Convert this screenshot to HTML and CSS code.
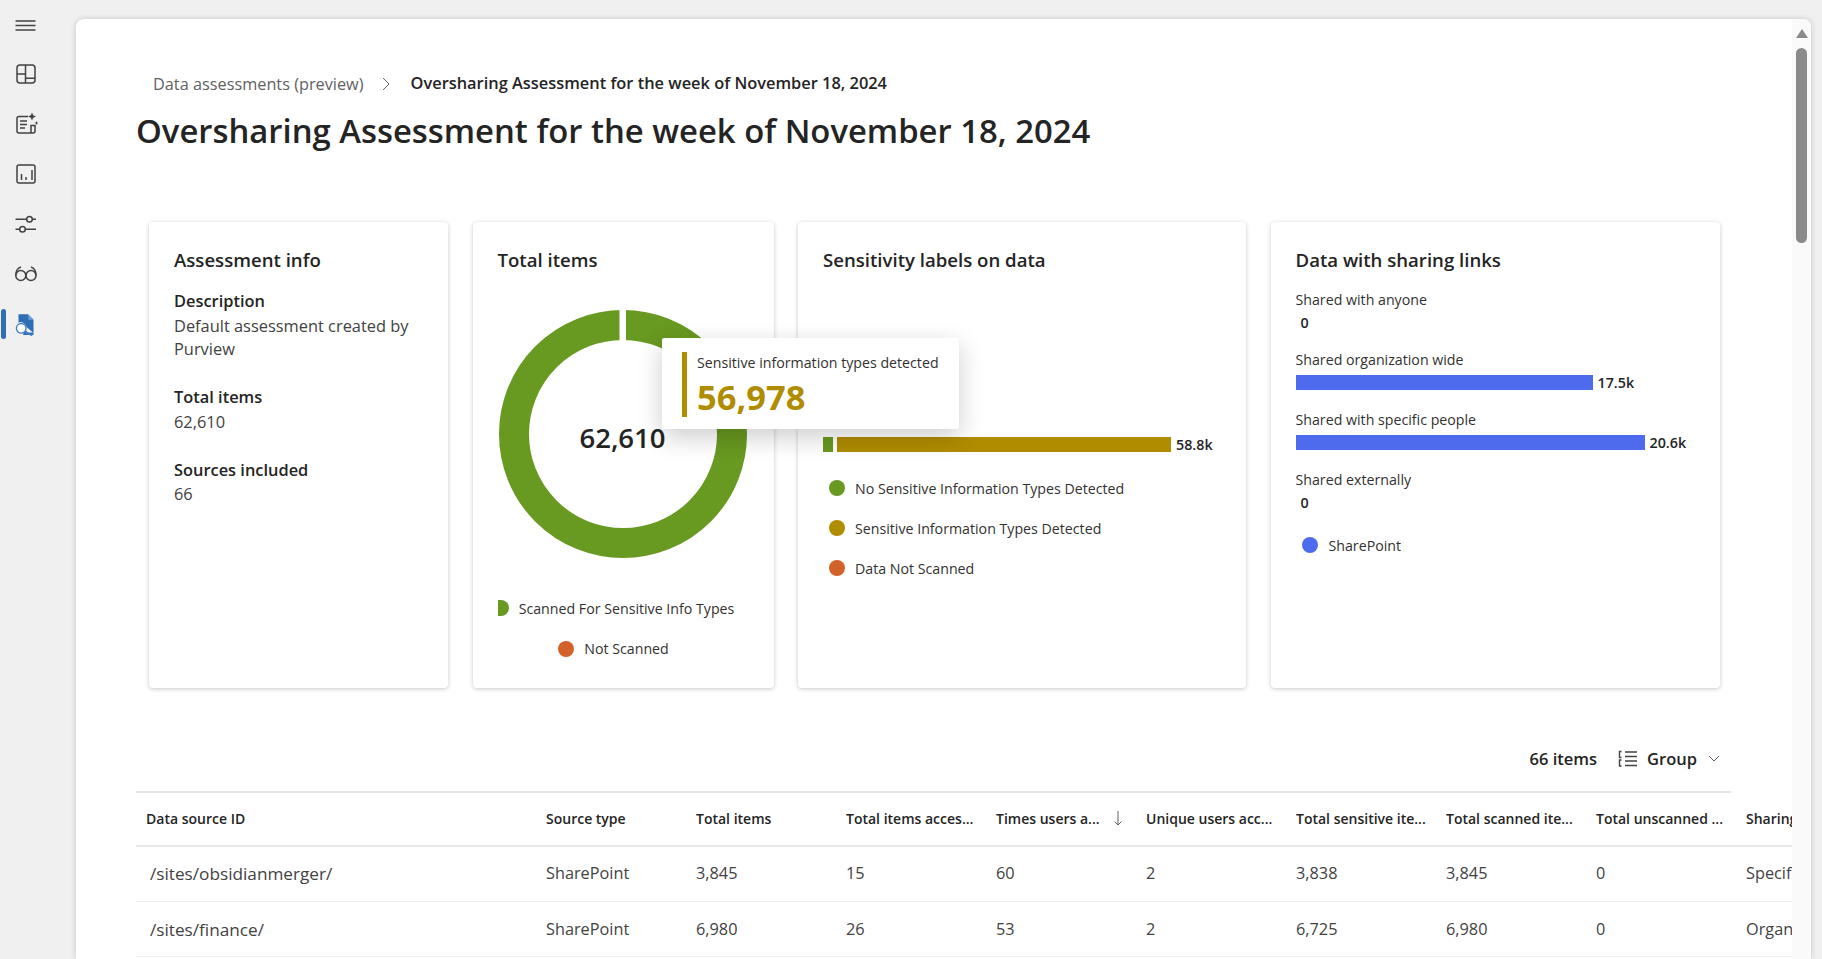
FILE: index.html
```html
<!DOCTYPE html>
<html lang="en">
<head>
<meta charset="utf-8">
<title>Oversharing Assessment</title>
<link rel="stylesheet" href="styles.css">
</head>
<body>
<nav class="rail">
  <a class="rail-item"><svg class="ico" viewBox="0 0 24 24"><path d="M1.500 8h20M1.500 12.500h20M1.500 17h20"/></svg></a>
  <a class="rail-item"><svg class="ico" viewBox="0 0 24 24"><rect x="3" y="3" width="18" height="18" rx="3"/><path d="M11.500 3v18M3 12h8.500M11.500 16.300H21"/></svg></a>
  <a class="rail-item"><svg class="ico" viewBox="0 0 24 24"><path d="M14 4.500H5a2 2 0 0 0-2 2V19a2 2 0 0 0 2 2h14a2 2 0 0 0 2-2v-5.500h-4V21M6 9h7M6 12.500h7M6 16h5"/><path class="solid" d="M18 .5l1.200 2.800L22 4.500l-2.800 1.200L18 8.500l-1.200-2.800L14 4.500l2.800-1.200zM22.500 9l.6 1.400 1.400.6-1.400.6-.6 1.400-.6-1.400-1.400-.6 1.400-.6z"/></svg></a>
  <a class="rail-item"><svg class="ico" viewBox="0 0 24 24"><rect x="3" y="3" width="18" height="18" rx="2"/><path d="M7.500 12v6M12 15v3M18 8v10"/></svg></a>
  <a class="rail-item"><svg class="ico" viewBox="0 0 24 24"><path d="M1.500 7.300h11M18.500 7.300H22M1.500 17.300h4M11.500 17.300H22"/><circle cx="15.500" cy="7.300" r="2.800"/><circle cx="8.500" cy="17.300" r="2.800"/></svg></a>
  <a class="rail-item"><svg class="ico" viewBox="0 0 24 24"><circle cx="6.800" cy="13.500" r="5"/><circle cx="17" cy="13.500" r="5"/><path d="M1.800 13.500C1.800 9 3.500 6 7 5M22 13.500C22 9 20.300 6 17 5"/></svg></a>
  <a class="rail-item is-active"><svg class="ico" viewBox="0 0 24 24"><path class="blue" d="M4.500 2.300h9.500l5.500 5.500V21l-7-6a6 6 0 0 0-8-4.500z"/><path class="blue" d="M11 17.500l3 3h5.500V23H9z"/><path class="bluefold" d="M14.300 2.300v5.500h5.200z"/><circle class="lens" cx="7.200" cy="16.300" r="4.800"/><path class="handle" d="M10.700 20l7.500 3.500"/></svg></a>
</nav>

<main class="panel">
  <div class="content">
    <div class="crumbs">
      <span class="crumb">Data assessments (preview)</span>
      <svg class="crumb-sep" viewBox="0 0 12 16"><path d="M3 2l6 6-6 6"/></svg>
      <span class="crumb-now">Oversharing Assessment for the week of November 18, 2024</span>
    </div>
    <h1 class="title">Oversharing Assessment for the week of November 18, 2024</h1>

    <section class="cards">
      <article class="card">
        <h2 class="card-title">Assessment info</h2>
        <dl class="info">
          <dt>Description</dt><dd>Default assessment created by Purview</dd>
          <dt>Total items</dt><dd>62,610</dd>
          <dt>Sources included</dt><dd>66</dd>
        </dl>
      </article>

      <article class="card">
        <h2 class="card-title">Total items</h2>
        <div class="donut">
          <svg viewBox="0 0 248 248" width="248" height="248">
            <circle class="donut-ring" cx="124" cy="124" r="109"/>
            <rect class="donut-gap" x="120.500" y="0" width="6.500" height="31"/>
          </svg>
          <span class="donut-value">62,610</span>
        </div>
        <ul class="legend legend-center">
          <li><i class="half"></i>Scanned For Sensitive Info Types</li>
          <li><i class="dot orange"></i>Not Scanned</li>
        </ul>
      </article>

      <article class="card">
        <h2 class="card-title">Sensitivity labels on data</h2>
        <div class="stack">
          <i class="stack-a"></i><i class="stack-b"></i><span class="bar-val">58.8k</span>
        </div>
        <ul class="legend legend-left">
          <li><i class="dot green"></i>No Sensitive Information Types Detected</li>
          <li><i class="dot gold"></i>Sensitive Information Types Detected</li>
          <li><i class="dot orange"></i>Data Not Scanned</li>
        </ul>
      </article>

      <article class="card">
        <h2 class="card-title">Data with sharing links</h2>
        <div class="shares">
          <div class="share"><div class="share-label">Shared with anyone</div><div class="share-row"><span class="bar-val zero">0</span></div></div>
          <div class="share"><div class="share-label">Shared organization wide</div><div class="share-row"><i class="share-bar" style="width:297px"></i><span class="bar-val">17.5k</span></div></div>
          <div class="share"><div class="share-label">Shared with specific people</div><div class="share-row"><i class="share-bar" style="width:349px"></i><span class="bar-val">20.6k</span></div></div>
          <div class="share"><div class="share-label">Shared externally</div><div class="share-row"><span class="bar-val zero">0</span></div></div>
        </div>
        <ul class="legend legend-left legend-tight">
          <li><i class="dot blue-dot"></i>SharePoint</li>
        </ul>
      </article>

      <div class="tooltip">
        <div class="tip-label">Sensitive information types detected</div>
        <div class="tip-value">56,978</div>
      </div>
    </section>

    <div class="toolbar">
      <span class="count">66 items</span>
      <span class="group">
        <svg class="group-ico" viewBox="0 0 20 20"><path d="M7 3h12M7 7.500h12M7 12h12M7 16.500h12M3.500 2.500H1.500v6h2M3.500 11H1.500v6h2"/></svg>
        Group
        <svg class="group-chev" viewBox="0 0 12 8"><path d="M1 1l5 5 5-5"/></svg>
      </span>
    </div>

    <div class="table">
      <div class="tr th">
        <span class="first">Data source ID</span><span>Source type</span><span>Total items</span><span>Total items acces...</span>
        <span class="sorted">Times users a...<svg class="sort" viewBox="0 0 10 16"><path d="M5 1v14M1.500 11.500L5 15l3.500-3.500"/></svg></span>
        <span>Unique users acc...</span><span>Total sensitive ite...</span><span>Total scanned ite...</span><span>Total unscanned ...</span><span>Sharing</span>
      </div>
      <div class="tr td td-first">
        <span class="first link">/sites/obsidianmerger/</span><span>SharePoint</span><span>3,845</span><span>15</span><span>60</span><span>2</span><span>3,838</span><span>3,845</span><span>0</span><span>Specific</span>
      </div>
      <div class="tr td">
        <span class="first link">/sites/finance/</span><span>SharePoint</span><span>6,980</span><span>26</span><span>53</span><span>2</span><span>6,725</span><span>6,980</span><span>0</span><span>Organization</span>
      </div>
    </div>
  </div>
  <div class="scroll">
    <i class="scroll-up"></i>
    <i class="scroll-thumb"></i>
  </div>
</main>
</body>
</html>
```
FILE: styles.css
```css
* { box-sizing: border-box; }
html, body { margin: 0; height: 100%; }
body {
  height: 959px;
  overflow: hidden;
  display: flex;
  background: #f0f0f0;
  color: #242424;
  font-family: "Open Sans", "Noto Sans", sans-serif;
}

.rail { width: 76px; flex: none; }
.rail-item { position: relative; display: flex; align-items: center; height: 50px; padding-left: 14px; }
.rail-item:first-child { height: 49px; }
.ico { width: 24px; height: 24px; fill: none; stroke: #424242; stroke-width: 1.5; overflow: visible; }
.ico .solid { fill: #424242; stroke: none; }
.ico .blue { fill: #2f6db5; stroke: none; }
.ico .bluefold { fill: #6b9fd8; stroke: none; }
.ico .lens { fill: #fff; stroke: #3f7fc4; stroke-width: 1.4; }
.ico .handle { stroke: #3f7fc4; stroke-width: 1.6; }
.is-active::before {
  content: "";
  position: absolute;
  left: 1px; top: 10px;
  width: 5px; height: 30px;
  border-radius: 3px;
  background: #2f6db5;
}

.panel {
  flex: 1;
  display: flex;
  margin: 19px 11px 0 0;
  background: #fff;
  border-radius: 8px 8px 0 0;
  box-shadow: 0 0 6px rgba(0,0,0,.18);
  overflow: hidden;
}
.content { flex: 1; min-width: 0; padding: 52px 0 0 60px; overflow: hidden; }

.crumbs { display: flex; align-items: center; height: 26px; padding-left: 17px; }
.crumb { font-size: 16.300px; color: #616161; }
.crumb-sep { width: 12px; height: 16px; margin: 0 19px 0 16px; fill: none; stroke: #616161; stroke-width: 1; }
.crumb-now { font-size: 16.400px; font-weight: 600; color: #242424; margin-bottom: 3px; white-space: nowrap; }
.title { margin: 12px 0 0; font-size: 32.850px; line-height: 44px; font-weight: 600; color: #242424; white-space: nowrap; }

.cards {
  position: relative;
  display: grid;
  grid-template-columns: 299px 301px 448px 449px;
  grid-template-rows: 466px;
  column-gap: 24.500px;
  width: 1571px;
  height: 466px;
  margin: 69px 0 0 13px;
}
.card {
  background: #fff;
  border-radius: 4px;
  box-shadow: 0 1px 4px rgba(0,0,0,.22);
  padding: 24px 25px 0;
}
.card-title { margin: 0; font-size: 18.600px; line-height: 28px; font-weight: 600; color: #242424; white-space: nowrap; }

.info { margin: 15px 0 0; font-size: 16.400px; }
.info dt { font-weight: 600; line-height: 24px; color: #242424; }
.info dd { margin: 1px 0 25px; line-height: 23px; color: #424242; }
.info dd:last-child { margin-top: 0; }

.donut { position: relative; width: 248px; height: 248px; margin: 36px 0 0 1px; }
.donut svg { display: block; }
.donut-ring { fill: none; stroke: #689920; stroke-width: 30; }
.donut-gap { fill: #fff; }
.donut-value {
  position: absolute; inset: 0;
  display: flex; align-items: center; justify-content: center;
  padding-top: 6px;
  font-size: 27.500px; font-weight: 600; color: #242424;
}

.legend { list-style: none; margin: 0; padding: 0; font-size: 14.200px; color: #323130; }
.legend li { display: flex; align-items: center; height: 40px; white-space: nowrap; }
.legend i { flex: none; }
.legend-center { margin-top: 30px; padding-right: 14px; }
.legend-center li { justify-content: center; }
.legend-center li:last-child { padding-right: 5px; height: 41px; }
.legend-center .half {
  width: 11px; height: 16px; margin-right: 10px;
  border-radius: 0 8px 8px 0;
  background: #689920;
}
.legend-center .dot { margin-right: 10px; }
.dot { width: 16px; height: 16px; border-radius: 50%; }
.orange { background: #d2622a; }
.green { background: #689920; }
.gold { background: #b08c00; }
.blue-dot { background: #4f6bed; }
.legend-left li { padding-left: 6px; }
.legend-left .dot { margin-right: 10px; }
.legend-tight { margin-top: 15px; }
.legend-tight .dot { margin-right: 11px; }

.stack { display: flex; align-items: center; height: 15px; margin-top: 163px; }
.stack-a { width: 10px; height: 15px; background: #689920; }
.stack-b { width: 334px; height: 15px; margin-left: 4px; background: #b08c00; }
.bar-val { font-size: 14.300px; font-weight: 600; color: #242424; margin-left: 5px; white-space: nowrap; }
.bar-val.zero { margin-left: 5px; }
.stack + .legend { margin-top: 16px; }

.shares { margin-top: 14px; }
.share { height: 60px; }
.share:last-child { height: 42px; }
.share-label { height: 24px; font-size: 14.200px; line-height: 24px; color: #323130; white-space: nowrap; }
.share-row { display: flex; align-items: center; height: 19px; margin-top: 1px; }
.share-bar { height: 15px; background: #4f6bed; }

.tooltip {
  position: absolute;
  left: 513px; top: 116px;
  width: 297px; height: 91px;
  background: #fff;
  border-radius: 2px;
  box-shadow: 0 8px 26px rgba(0,0,0,.2);
  padding: 14px 0 0 20px;
}
.tip-label {
  border-left: 5px solid #b08c00;
  padding: 1px 0 0 10px;
  font-size: 14.200px; line-height: 20px; color: #323130;
  white-space: nowrap;
}
.tip-value {
  border-left: 5px solid #b08c00;
  padding-left: 10px;
  height: 44px;
  font-size: 34.500px; line-height: 47px; font-weight: 700; color: #b08c00;
}

.toolbar {
  display: flex; align-items: center; justify-content: flex-end;
  width: 1595px;
  height: 56px;
  margin-top: 47px;
  padding: 0 11px 9px 0;
  font-size: 16.500px; font-weight: 600; color: #242424;
}
.group { display: flex; align-items: center; margin-left: 21px; gap: 9px; }
.group-ico { width: 20px; height: 20px; fill: none; stroke: #424242; stroke-width: 1.4; }
.group-chev { width: 12px; height: 8px; fill: none; stroke: #616161; stroke-width: 1; margin-left: 2px; }

.table { width: 100%; overflow: hidden; }
.tr { display: grid; grid-template-columns: 400px repeat(9, 150px); align-items: center; width: 1750px; }
.tr span { padding-left: 10px; white-space: nowrap; overflow: hidden; }
.th { height: 56px; font-size: 14px; font-weight: 600; color: #242424; border-bottom: 2px solid #e6e6e6; position: relative; }
.th::before { content: ""; position: absolute; left: 0; top: 0; width: 1595px; border-top: 2px solid #e6e6e6; }
.td { height: 55px; font-size: 16.300px; color: #424242; border-bottom: 1px solid #f0f0f0; }
.td-first { padding-bottom: 2px; }
.tr .first.link { padding-left: 14px; font-size: 17.200px; }
.sorted { display: flex; align-items: center; }
.sort { width: 10px; height: 16px; margin-left: 13px; fill: none; stroke: #616161; stroke-width: 1; flex: none; }

.scroll { position: relative; flex: none; width: 19px; background: #fafafa; }
.scroll-up {
  position: absolute; left: 4px; top: 10px;
  border-left: 6px solid transparent;
  border-right: 6px solid transparent;
  border-bottom: 9px solid #8a8a8a;
}
.scroll-thumb {
  position: absolute; left: 4px; top: 29px;
  width: 11px; height: 195px;
  border-radius: 6px;
  background: #8a8a8a;
}
```
